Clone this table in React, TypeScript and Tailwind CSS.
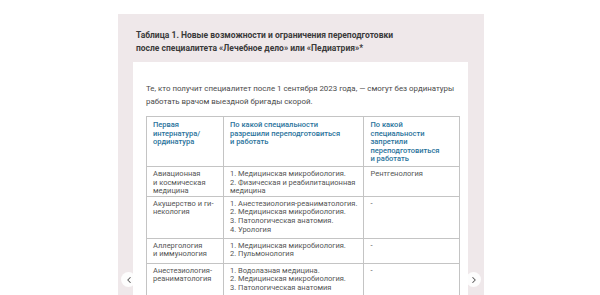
import { ChevronLeft, ChevronRight } from 'lucide-react';

const rows = [
  {
    name: ['Авиационная', 'и космическая', 'медицина'],
    allowed: ['1. Медицинская микробиология.', '2. Физическая и реабилитационная', 'медицина'],
    banned: 'Рентгенология',
    h: 'h-[29px]',
  },
  {
    name: ['Акушерство и ги-', 'некология'],
    allowed: [
      '1. Анестезиология-реаниматология.',
      '2. Медицинская микробиология.',
      '3. Патологическая анатомия.',
      '4. Урология',
    ],
    banned: '-',
    h: 'h-[42px]',
  },
  {
    name: ['Аллергология', 'и иммунология'],
    allowed: ['1. Медицинская микробиология.', '2. Пульмонология'],
    banned: '-',
    h: 'h-[25px]',
  },
  {
    name: ['Анестезиология-', 'реаниматология'],
    allowed: ['1. Водолазная медицина.', '2. Медицинская микробиология.', '3. Патологическая анатомия'],
    banned: '-',
    h: 'h-[40px]',
  },
];

function Lines({ items }: { items: string[] }) {
  return (
    <>
      {items.map((t, i) => (
        <div key={i} className="whitespace-nowrap">{t}</div>
      ))}
    </>
  );
}

export default function App() {
  return (
    <div className="w-[600px] h-[295px] overflow-hidden bg-white font-['Roboto',sans-serif]">
      <div className="relative ml-[118px] mt-[14px] w-[366px] h-[281px] bg-[#efe8ea] pt-[15px]">
        <h2 className="pl-[18px] text-[8.5px] leading-[13px] font-bold text-[#3a3a3a]">
          Таблица 1. Новые возможности и ограничения переподготовки
          <br />
          после специалитета «Лечебное дело» или «Педиатрия»*
        </h2>
        <div className="mt-[7px] ml-[15px] w-[335px] h-[300px] bg-white pl-[13px] pt-[20px]">
          <p className="text-[7.9px] leading-[13px] text-[#4a4a4a]">
            Те, кто получит специалитет после 1 сентября 2023 года, — смогут без ординатуры
            <br />
            работать врачом выездной бригады скорой.
          </p>
          <table className="mt-[8px] border-collapse text-[7.5px] leading-[8.6px] text-[#555]">
            <thead>
              <tr className="h-[50px] align-top text-[#2a739c]">
                <th className="w-[77px] border border-[#c4c4c4] px-[6px] pt-[4px] text-left font-medium">
                  <Lines items={['Первая', 'интернатура/', 'ординатура']} />
                </th>
                <th className="w-[138px] border border-[#c4c4c4] px-[6px] pt-[4px] text-left font-medium">
                  <Lines items={['По какой специальности', 'разрешили переподготовиться', 'и работать']} />
                </th>
                <th className="w-[96px] border border-[#c4c4c4] px-[6px] pt-[4px] text-left font-medium">
                  <Lines items={['По какой', 'специальности', 'запретили', 'переподготовиться', 'и работать']} />
                </th>
              </tr>
            </thead>
            <tbody>
              {rows.map((r, i) => (
                <tr key={i} className={`${r.h} align-top`}>
                  <td className="border border-[#c4c4c4] px-[6px] pt-[3px]">
                    <Lines items={r.name} />
                  </td>
                  <td className="border border-[#c4c4c4] px-[6px] pt-[3px]">
                    <Lines items={r.allowed} />
                  </td>
                  <td className="border border-[#c4c4c4] px-[6px] pt-[3px]">{r.banned}</td>
                </tr>
              ))}
            </tbody>
          </table>
        </div>
        <button className="absolute left-[3px] top-[258px] flex h-[15px] w-[15px] items-center justify-center rounded-full bg-white/90 text-[#555]">
          <ChevronLeft size={10} strokeWidth={2.5} />
        </button>
        <button className="absolute left-[348px] top-[258px] flex h-[15px] w-[15px] items-center justify-center rounded-full bg-white/90 text-[#555]">
          <ChevronRight size={10} strokeWidth={2.5} />
        </button>
      </div>
    </div>
  );
}
